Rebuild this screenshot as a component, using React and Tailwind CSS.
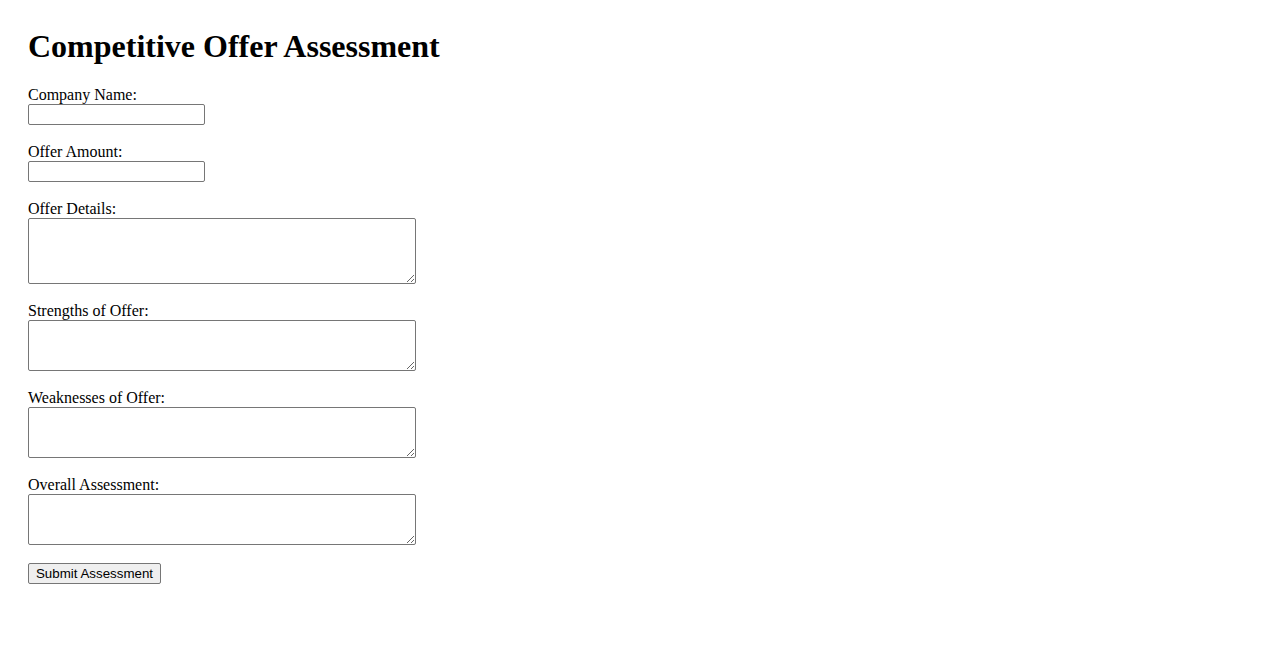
import React from 'react';

const fields = [
    { label: 'Offer Details:', h: 'h-[66px]' },
    { label: 'Strengths of Offer:', h: 'h-[51px]' },
    { label: 'Weaknesses of Offer:', h: 'h-[51px]' },
    { label: 'Overall Assessment:', h: 'h-[51px]' },
];

export default function App() {
    return (
        <div className="min-h-screen bg-white text-black px-[28px] pt-[28px] font-['Liberation_Serif',serif]">
            <h1 className="text-[32px] font-bold leading-[37px] mb-[21px]">
                Competitive Offer Assessment
            </h1>

            <form className="flex flex-col items-start" onSubmit={e => e.preventDefault()}>
                <label className="text-[16px] leading-[18px]">Company Name:</label>
                <input
                    type="text"
                    className="w-[177px] h-[21px] border border-[#767676] rounded-[2px] px-[2px] text-[13px] mb-[18px]"
                />

                <label className="text-[16px] leading-[18px]">Offer Amount:</label>
                <input
                    type="text"
                    className="w-[177px] h-[21px] border border-[#767676] rounded-[2px] px-[2px] text-[13px] mb-[18px]"
                />

                {fields.map(f => (
                    <React.Fragment key={f.label}>
                        <label className="text-[16px] leading-[18px]">{f.label}</label>
                        <textarea
                            className={`w-[388px] ${f.h} border border-[#767676] rounded-[2px] p-[2px] text-[13px] mb-[18px] resize`}
                        />
                    </React.Fragment>
                ))}

                <button
                    type="submit"
                    className="w-[133px] h-[21px] bg-[#efefef] border border-[#767676] rounded-[2px] text-[13.33px] leading-[17px] font-['Liberation_Sans',Arial,sans-serif]"
                >
                    Submit Assessment
                </button>
            </form>
        </div>
    );
}
